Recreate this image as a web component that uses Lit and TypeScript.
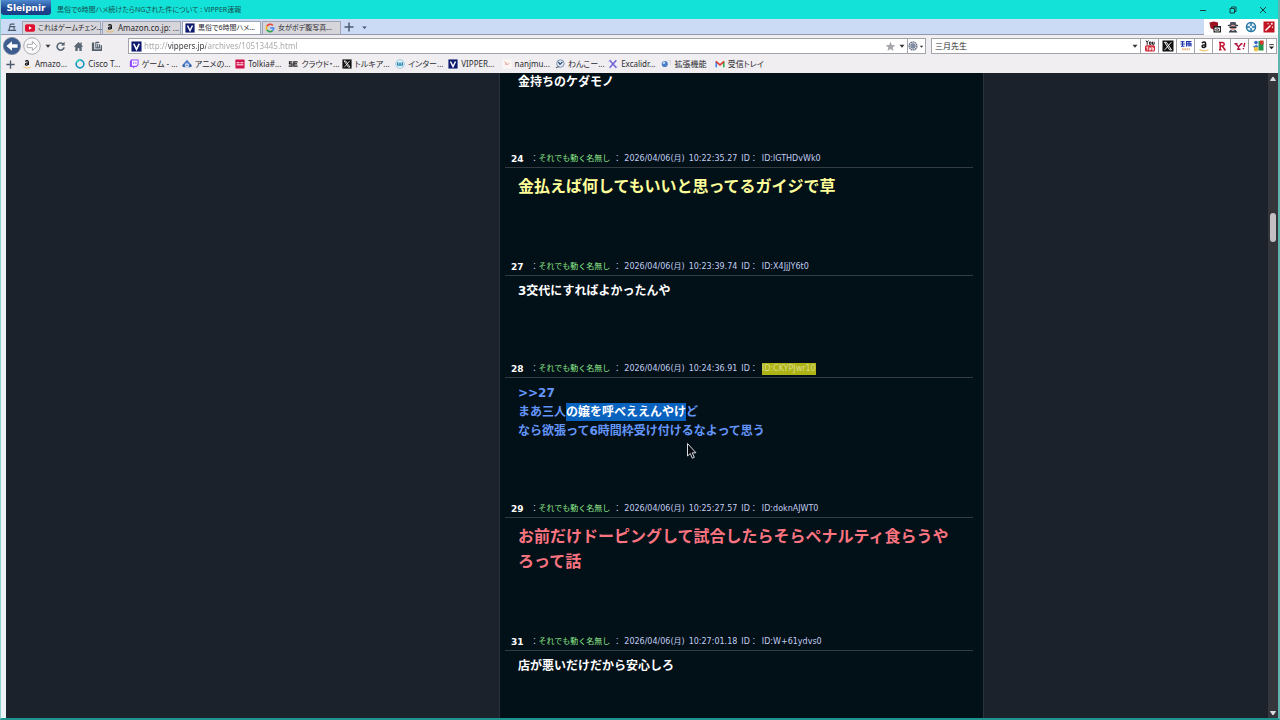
import { LitElement, html, css, svg, nothing, TemplateResult } from "lit";
import { customElement, property } from "lit/decorators.js";
import { classMap } from "lit/directives/class-map.js";

/* ---------- icons, all on a 12 x 12 grid ---------- */
const amazon = svg`<path d="M4.200 3.200C4.600 1.700 7.600 1.600 7.600 3.600v3.600M7.600 4.800C5.400 4.700 4 5.300 4.100 6.500c.2 1.400 2.700 1.200 3.500-.4" fill="none" stroke="#111" stroke-width="1.500"/><path d="M1.500 9.400c3 1.900 6.500 1.900 9 .2" fill="none" stroke="#f0b552" stroke-width="1.100"/>`;
const vip = svg`<rect x=".5" y=".5" width="11" height="11" fill="#0d1a6e"/><path d="M3 3l3 6.200L9 3" fill="none" stroke="#fff" stroke-width="1.700"/>`;
const xLogo = svg`<rect x=".5" y=".5" width="11" height="11" fill="#111"/><path d="M2.500 2.300h1.900l5.100 7.500H7.600z" fill="none" stroke="#fff" stroke-width="1"/><path d="M9.300 2.200L2.700 9.900" stroke="#fff" stroke-width=".9"/>`;

const ICONS: Record<string, TemplateResult> = {
  amazon,
  vip,
  x: xLogo,
  tray: svg`<path d="M4 2.500h5M3 5.500h7M1 10h10M4 2.500L2.500 9.500M8.500 5.500v4" fill="none" stroke="#4c5a66" stroke-width="1.300"/>`,
  youtube: svg`<rect x="0" y="1.500" width="12" height="9" rx="2" fill="#e01030"/><path d="M4.700 4v4l3.500-2z" fill="#fff"/>`,
  google: svg`<g fill="none" stroke-width="2"><path d="M9.400 3A4.400 4.400 0 0 0 2.200 4" stroke="#e8453c"/><path d="M2.200 4a4.400 4.400 0 0 0 0 4" stroke="#f6b90c"/><path d="M2.200 8a4.400 4.400 0 0 0 6.800 1.300" stroke="#34a553"/><path d="M9 9.300A4.400 4.400 0 0 0 10.400 6H6.200" stroke="#4285f4"/></g>`,
  plus: svg`<path d="M6 1.500v9M1.500 6h9" stroke="#4c5a70" stroke-width="1.500"/>`,
  down: svg`<path d="M3 4.500h6L6 8z" fill="#333"/>`,
  chevron: svg`<path d="M3 4.500h6L6 8z" fill="#3f5078"/>`,
  reload: svg`<path d="M9.200 3.600A3.900 3.900 0 1 0 10 7" fill="none" stroke="#53606e" stroke-width="1.700"/><path d="M6.500 4.800h4V.8z" fill="#53606e"/>`,
  home: svg`<path d="M6 1L.8 6.200h1.700V11h2.600V8h1.800v3h2.600V6.200h1.700L9.500 4.500V1.700H8v1.200z" fill="#5a6876"/>`,
  save: svg`<path d="M1 1.500h2.500V9h7V4.500H12V11H1z" fill="#53606e"/><path d="M5.300 1v6.500h4V3.500M5.300 1.500H9M7.300 3v4" fill="none" stroke="#53606e" stroke-width="1.200"/>`,
  cisco: svg`<circle cx="6" cy="6" r="4.600" fill="none" stroke="#1598c4" stroke-width="2"/><path d="M1.800 4a4.600 4.600 0 0 1 5-2.500" fill="none" stroke="#42d0c0" stroke-width="2"/>`,
  twitch: svg`<path d="M2.500.5H11.500v6.700L9 9.700H6.700L4.800 11.600V9.700H1V3z" fill="#9146ff"/><path d="M3.500 1.700h6.800v5L8.700 8.200H3.500z" fill="#fff"/><path d="M5.700 3.300v2.900M8.300 3.300v2.900" stroke="#9146ff" stroke-width="1"/>`,
  anime: svg`<path d="M1 6.500L6 1l5 5.500-1 3.500H2z" fill="#4d7cc9"/><circle cx="6" cy="7.500" r="2.500" fill="#e9f1fd"/><path d="M4.500 7.500h3" stroke="#30528f"/><circle cx="1.800" cy="8" r="1.500" fill="#345fa9"/><circle cx="10.200" cy="8" r="1.500" fill="#345fa9"/>`,
  tolkia: svg`<rect x=".5" y=".5" width="11" height="11" rx="1" fill="#d3124d"/><path d="M2 4.500h3.500M6.500 4.500h3.500M2 7h8" stroke="#fff" stroke-width="1.200"/>`,
  se: svg`<path d="M5.200 3.300H1.800v2.500h3v2.700H.8M11.500 3.300H7v5.200h4.500M7 5.900h4" fill="none" stroke="#222" stroke-width="1.500"/>`,
  inter: svg`<circle cx="6" cy="6" r="5.200" fill="#e3f2fa" stroke="#8fc3dc"/><path d="M3 4v3.500h2V4M5 7.500h2V4M9 4v3.500H7" fill="none" stroke="#1f7fae" stroke-width="1.200"/>`,
  nanj: svg`<rect x=".5" y=".5" width="11" height="11" fill="#fbf6f4"/><path d="M3 3l3 4 3-2M4 7l2-3" fill="none" stroke="#e39a8d" stroke-width="1"/>`,
  wan: svg`<circle cx="6.500" cy="5.500" r="4.500" fill="#dfe8f4" stroke="#6683ab"/><path d="M4 3.500l2 3 3-3" fill="none" stroke="#27406b" stroke-width="1.300"/><path d="M1 10.500l4-1.500" stroke="#55606e" stroke-width="1.500"/>`,
  excali: svg`<path d="M2 1.500l8 9M10 1.500l-8 9" stroke="#6b63d8" stroke-width="1.800"/><path d="M1 3l2-2M9 11l2-2" stroke="#8c86e6" stroke-width="1.200"/>`,
  ext: svg`<circle cx="4.500" cy="6" r="3.700" fill="#4c7ec6"/><circle cx="3.500" cy="4.500" r="1.600" fill="#b9d6f5"/><path d="M8 1.500l3.500 1v5" fill="none" stroke="#d7d9de" stroke-width="1.500"/>`,
  gmail: svg`<path d="M1.500 10V3" stroke="#4285f4" stroke-width="2"/><path d="M10.500 10V3" stroke="#34a853" stroke-width="2"/><path d="M1 2.800L6 7l5-4.200" fill="none" stroke="#e0402f" stroke-width="2"/>`,
  star: svg`<path d="M6 .8l1.500 3.500 3.800.3-2.900 2.500.9 3.700L6 8.800l-3.300 2 .9-3.700L.7 4.600l3.800-.3z" fill="#a7a7ab"/>`,
  gear: svg`<circle cx="6" cy="6" r="4.700" fill="none" stroke="#5c6780" stroke-width="1.600" stroke-dasharray="2 .6"/><circle cx="6" cy="6" r="2.700" fill="#aab4c9" stroke="#48536c"/><circle cx="6" cy="6" r="1" fill="#48536c"/>`,
  ytSearch: svg`<path d="M2 .5l1.200 2L4.400.5M3.200 2.500v2.300M5.500 2h1.600v2.300H5.500zM8.500 1.700v2.600h1.600V1.700" fill="none" stroke="#222" stroke-width="1"/><rect x="1" y="5.300" width="10" height="6.200" rx="1.500" fill="#cf2936"/><path d="M2.300 7h2M3.300 7v3.300M5.300 7.500v2.500h1.200V7.500M8 6.800v3.200h1.500V8H8" fill="none" stroke="#fff" stroke-width=".8"/>`,
  kakaku: svg`<path d="M.5 1.700h4M2.500 1v5.500M.5 4h4.500M1 6.200h3.500M6 1.500h5.500M6 3.200h5M6.500 5h5M6.500 1v5.500M9 1v5.500M11 3v3.500" stroke="#1c35ab" stroke-width="1.100"/><path d="M2 9.300h8" stroke="#e8b988" stroke-width="2" stroke-dasharray="1.700 .6"/>`,
  rakuten: svg`<path d="M4.200 9.500V2.500h2.300a1.700 1.700 0 0 1 0 3.500H4.200M6.300 6L8.700 9.500M3 9.800h2.500M3 2.500h1.500M7.700 9.800h2" fill="none" stroke="#c4122f" stroke-width="1.500"/>`,
  yahoo: svg`<path d="M.5 3.700h3M1.800 4L4.500 6.700l3-3M4.500 6.700V9M3 9.200h3.500M6.500 3.700h2" fill="none" stroke="#b3123f" stroke-width="1.400"/><path d="M10.800 2.800L9.800 7M9.400 8v1.300" stroke="#b3123f" stroke-width="1.400"/>`,
  gmaps: svg`<rect x="6.500" y="1" width="5" height="9.500" fill="#23934f"/><path d="M8 .5h3.500v4H8z" fill="#d83a2f"/><circle cx="4" cy="2.500" r="1.800" fill="#3a68c9"/><path d="M.8 6.500l4-2 1.700 2.500-3.500 1.700z" fill="#4f86c8"/><circle cx="4" cy="9.200" r="2.200" fill="#edc142"/>`,
  more: svg`<path d="M3 3.500h6" stroke="#222" stroke-width="1.200"/><path d="M2.500 6h7L6 9.500z" fill="#222"/>`,
  shield: svg`<path d="M.5 1.500L5 .5l4 1v4.500L5 9 1.500 7z" fill="#9c1420"/><rect x="4.500" y="5" width="7.500" height="6.500" fill="#222"/><path d="M6 7h4.500v3H6zM6 7l2.200 1.500L10.500 7" fill="none" stroke="#fff" stroke-width=".8"/>`,
  spy: svg`<path d="M2.500 4l1-3h5l1 3" fill="#4b5565"/><path d="M.8 4.500h10.400" stroke="#39424f" stroke-width="1.300"/><circle cx="6" cy="6.500" r="2.800" fill="#d99f92"/><path d="M2.500 6.300h7" stroke="#1f2937" stroke-width="1.700"/><path d="M1.500 11.500l2-2.700L6 10l2.500-1.200 2 2.700z" fill="#39424f"/>`,
  target: svg`<circle cx="6" cy="6" r="4.500" fill="#dff0f8" stroke="#2778a5" stroke-width="1.500"/><path d="M6 2v3M6 7v3M2 6h3M7 6h3" stroke="#2778a5" stroke-width="1.500"/>`,
  wand: svg`<rect x=".5" y=".5" width="11" height="11" fill="#c01522"/><path d="M2.500 9.500l5-5" stroke="#fff" stroke-width="1.500"/><path d="M8.800 1.800v2M7.800 2.800h2M9.500 5.500v1.500M5 2v1.300" stroke="#fff" stroke-width=".9"/>`,
  min: svg`<path d="M3 6.500h6" stroke="#17403f" stroke-width="1"/>`,
  restore: svg`<path d="M3 4.500h4.500V9H3zM4.500 4.500V3H9v4.500H7.500" fill="none" stroke="#17403f" stroke-width="1"/>`,
  close: svg`<path d="M3 3l6 6M9 3l-6 6" stroke="#17403f" stroke-width="1"/>`,
  back: svg`<circle cx="6" cy="6" r="5.700" fill="#3d5d91" stroke="#6c7c98" stroke-width=".5"/><path d="M2.300 6L6 2.800v2.100h3.700v2.200H6v2.100z" fill="#fff"/>`,
  forward: svg`<circle cx="6" cy="6" r="5.500" fill="#f8f8fa" stroke="#a2a2a8" stroke-width=".6"/><path d="M9.500 6L6.300 3v1.900H2.800v2.200h3.500V9z" fill="#fff" stroke="#a2a2a8" stroke-width=".6"/>`,
};

@customElement("ui-icon")
class UiIcon extends LitElement {
  @property() name = "";
  @property({ type: Number }) size = 12;
  static styles = css`
    :host { display: inline-flex; flex: none; }
    svg { display: block; }
  `;
  render() {
    return html`<svg width=${this.size} height=${this.size} viewBox="0 0 12 12" aria-hidden="true">${ICONS[this.name]}</svg>`;
  }
}

/* ---------- browser chrome ---------- */
const TABS = [
  { icon: "youtube", text: "これはゲームチェン...", compact: true },
  { icon: "amazon", text: "Amazon.co.jp: ..." },
  { icon: "vip", text: "黒俗で6時間ハメ...", compact: true, active: true },
  { icon: "google", text: "女がボデ腹写真...", compact: true },
];

const BOOKMARKS = [
  ["amazon", "Amazo..."],
  ["cisco", "Cisco T..."],
  ["twitch", "ゲーム - ..."],
  ["anime", "アニメの..."],
  ["tolkia", "Tolkia#..."],
  ["se", "クラウド・..."],
  ["x", "トルキア..."],
  ["inter", "インター..."],
  ["vip", "VIPPER..."],
  ["nanj", "nanjmu..."],
  ["wan", "わんこー..."],
  ["excali", "Excalidr..."],
  ["ext", "拡張機能"],
  ["gmail", "受信トレイ"],
];

const ENGINES = [
  ["ytSearch", "YouTube"],
  ["x", "X"],
  ["kakaku", "価格.com"],
  ["amazon", "Amazon"],
  ["rakuten", "楽天"],
  ["yahoo", "Yahoo!"],
  ["gmaps", "Google マップ"],
];

@customElement("browser-chrome")
class BrowserChrome extends LitElement {
  static styles = css`
    :host {
      display: block;
      flex: none;
      color: #2a2a30;
      font: 8px/12px "Noto Sans", "Noto Sans CJK JP", sans-serif;
      font-feature-settings: "palt";
      background: #f0eef1;
    }
    button, input {
      font: inherit;
      font-feature-settings: inherit;
      color: inherit;
      margin: 0;
      padding: 0;
      border: 0;
      background: none;
    }
    button { display: flex; align-items: center; justify-content: center; }
    .title { display: flex; height: 19px; background: #12e2d8; }
    .brand {
      width: 50px;
      height: 15px;
      border-radius: 0 0 3px 3px;
      background: linear-gradient(#4f8ad0, #1c4590 60%, #1b3d84);
      color: #fff;
      font: bold 9px/14px "DejaVu Sans", sans-serif;
    }
    .caption { flex: 1; padding-left: 6px; font-size: 7px; line-height: 19px; color: #14504f; white-space: nowrap; }
    .window { display: flex; gap: 18px; padding-right: 9px; }
    .tabs { display: flex; height: 15px; background: #cbdaf5; border-bottom: 1px solid #9698ae; }
    .tray { width: 16px; margin-left: 3px; }
    .list { display: flex; align-items: flex-end; gap: 1px; padding-left: 2px; flex: 1; }
    .tab {
      width: 79px;
      height: 13px;
      gap: 3px;
      padding-left: 2px;
      justify-content: flex-start;
      box-sizing: border-box;
      border: 1px solid #a2a5b4;
      border-bottom: 0;
      background: #d6d5da;
      white-space: nowrap;
    }
    .compact { font-size: 7px; }
    .active { background: #fff; }
    .small { width: 14px; height: 14px; }
    .extensions { display: flex; align-items: center; gap: 6px; height: 16px; padding: 0 3px 0 5px; background: #fff; }
    .address { display: flex; align-items: center; height: 22px; padding: 0 1px 0 2px; }
    .nav { display: flex; align-items: center; gap: 2px; width: 125px; }
    .tools { display: flex; gap: 7px; }
    .box {
      display: flex;
      align-items: center;
      height: 16px;
      box-sizing: border-box;
      border: 1px solid #a3a3aa;
      background: #fff;
    }
    .url { flex: 700; padding-left: 2px; }
    .search { flex: 246; min-width: 346px; margin-left: 5px; padding-left: 3px; box-sizing: border-box; }
    .field { flex: 1; min-width: 0; height: 12px; outline: 0; }
    .location {
      margin-left: 2px;
      color: transparent;
      background: linear-gradient(90deg, #a4a4a8 24px, #33333a 24px, #33333a 62px, #a4a4a8 62px);
      background-clip: text;
      -webkit-background-clip: text;
    }
    .cell { width: 18px; height: 14px; box-sizing: border-box; border-left: 1px solid #a3a3aa; }
    .last { width: 10px; }
    .arrow { width: 11px; }
    .bookmarks { display: flex; height: 16px; padding-left: 2px; }
    .links { display: grid; grid-template-columns: repeat(14, 1fr); width: 746px; height: 14px; margin-left: 5px; }
    .link { display: flex; align-items: center; gap: 3px; color: inherit; text-decoration: none; white-space: nowrap; }
  `;
  render() {
    return html`
      <div class="title">
        <button class="brand">Sleipnir</button>
        <div class="caption">黒俗で6時間ハメ続けたらNGされた件について : VIPPER速報</div>
        <div class="window">
          <button aria-label="最小化"><ui-icon name="min"></ui-icon></button>
          <button aria-label="元に戻す"><ui-icon name="restore"></ui-icon></button>
          <button aria-label="閉じる"><ui-icon name="close"></ui-icon></button>
        </div>
      </div>
      <div class="tabs">
        <button class="tray" aria-label="タブ一覧"><ui-icon name="tray" size="10"></ui-icon></button>
        <div class="list" role="tablist">
          ${TABS.map(
            (t) => html`<button role="tab" class=${classMap({ tab: true, compact: !!t.compact, active: !!t.active })} aria-selected=${t.active ? "true" : "false"}>
              <ui-icon name=${t.icon} size="10"></ui-icon>${t.text}
            </button>`
          )}
          <button class="small" aria-label="新しいタブ"><ui-icon name="plus"></ui-icon></button>
          <button class="small" aria-label="閉じたタブ"><ui-icon name="chevron" size="9"></ui-icon></button>
        </div>
        <div class="extensions">
          ${["shield", "spy", "target", "wand"].map((n) => html`<button aria-label=${n}><ui-icon name=${n}></ui-icon></button>`)}
        </div>
      </div>
      <div class="address">
        <div class="nav">
          <button aria-label="戻る"><ui-icon name="back" size="18"></ui-icon></button>
          <button aria-label="進む"><ui-icon name="forward" size="18"></ui-icon></button>
          <button aria-label="履歴"><ui-icon name="down" size="10"></ui-icon></button>
          <div class="tools">
            <button aria-label="更新"><ui-icon name="reload" size="11"></ui-icon></button>
            <button aria-label="ホーム"><ui-icon name="home" size="11"></ui-icon></button>
            <button aria-label="保存"><ui-icon name="save" size="11"></ui-icon></button>
          </div>
        </div>
        <div class="box url">
          <ui-icon name="vip" size="11"></ui-icon>
          <input class="field location" aria-label="アドレス" value="http://vippers.jp/archives/10513445.html" />
          <button aria-label="お気に入り"><ui-icon name="star" size="11"></ui-icon></button>
          <button class="arrow" aria-label="候補"><ui-icon name="down" size="10"></ui-icon></button>
          <button class="cell" aria-label="エンジン"><ui-icon name="gear" size="10"></ui-icon><ui-icon name="down" size="7"></ui-icon></button>
        </div>
        <div class="box search">
          <input class="field" aria-label="検索" value="三月先生" />
          <button class="arrow" aria-label="検索履歴"><ui-icon name="down" size="10"></ui-icon></button>
          ${ENGINES.map(([i, n]) => html`<button class="cell" aria-label=${n}><ui-icon name=${i}></ui-icon></button>`)}
          <button class="cell last" aria-label="その他"><ui-icon name="more" size="9"></ui-icon></button>
        </div>
      </div>
      <div class="bookmarks">
        <button class="small" aria-label="追加"><ui-icon name="plus" size="11"></ui-icon></button>
        <nav class="links">
          ${BOOKMARKS.map(([i, n]) => html`<a class="link" href="#"><ui-icon name=${i} size="10"></ui-icon>${n}</a>`)}
        </nav>
      </div>
    `;
  }
}

/* ---------- thread ---------- */
interface Post {
  no?: number;
  time?: string;
  id?: string;
  marked?: boolean;
  tone?: string;
  body: TemplateResult;
}

const POSTS: Post[] = [
  { body: html`金持ちのケダモノ` },
  { no: 24, time: "10:22:35.27", id: "lGTHDvWk0", tone: "yellow", body: html`金払えば何してもいいと思ってるガイジで草` },
  { no: 27, time: "10:23:39.74", id: "X4JjJY6t0", body: html`3交代にすればよかったんや` },
  {
    no: 28,
    time: "10:24:36.91",
    id: "CKYPJwr10",
    marked: true,
    tone: "blue",
    body: html`&gt;&gt;27<br />まあ三人<span class="selected">の嬢を呼べええんやけ</span>ど<br />なら欲張って6時間枠受け付けるなよって思う`,
  },
  { no: 29, time: "10:25:27.57", id: "doknAJWT0", tone: "red", body: html`お前だけドーピングして試合したらそらペナルティ食らうやろって話` },
  { no: 31, time: "10:27:01.18", id: "W+61ydvs0", body: html`店が悪いだけだから安心しろ` },
];

@customElement("thread-view")
class ThreadView extends LitElement {
  static styles = css`
    :host {
      display: block;
      box-sizing: border-box;
      padding: 0 10px 0 5px;
      border: solid #2c323d;
      border-width: 0 1px;
      background: #021018;
      font-family: "DejaVu Sans", "Noto Sans CJK JP", sans-serif;
    }
    .meta {
      display: flex;
      align-items: center;
      gap: 3px;
      height: 17px;
      padding-left: 6px;
      border-bottom: 1px solid #343a42;
      color: #c3cdf0;
      font-size: 8px;
      line-height: 12px;
      white-space: nowrap;
    }
    .no { margin-right: 4px; color: #fff; font-size: 9px; font-weight: bold; }
    .name { color: #8fe88a; }
    .stamp { display: flex; gap: 4px; }
    .marked { background: #aeb415; color: #d9dc8a; }
    .body {
      padding: 6px 13px 59px;
      color: #fff;
      font-size: 12px;
      font-weight: bold;
      line-height: 19px;
      word-break: break-all;
    }
    .first { padding-top: 0; padding-bottom: 58px; }
    .yellow { color: #ffff9a; font-size: 16px; line-height: 25px; }
    .red { color: #fb7480; font-size: 16px; line-height: 25px; }
    .blue { color: #6496fa; }
    .selected { padding: 2px 0; background: #0a62bf; color: #fff; }
  `;
  render() {
    return POSTS.map(
      (p) => html`<article>
        ${p.no
          ? html`<header class="meta">
              <span class="no">${p.no}</span>
              <span>：<span class="name">それでも動く名無し</span></span>
              <span>：</span>
              <span class="stamp">
                <span>2026/04/06(月)</span><span>${p.time}</span><span>ID：</span><span class=${p.marked ? "marked" : "id"}>ID:${p.id}</span>
              </span>
            </header>`
          : nothing}
        <div class="body ${p.tone ?? ""} ${p.no ? "" : "first"}">${p.body}</div>
      </article>`
    );
  }
}

@customElement("app-root")
class AppRoot extends LitElement {
  static styles = css`
    :host {
      display: flex;
      flex-direction: column;
      height: 100vh;
      box-sizing: border-box;
      border-right: 2px solid #5fb5ae;
      border-bottom: 2px solid #1f938e;
      border-left: 1px solid #8fcfd0;
      overflow: hidden;
      background: #12e2d8;
    }
    .view { display: flex; flex: 1; min-height: 0; padding-left: 5px; background: #edf3f6; }
    .page {
      display: grid;
      grid-template-columns: 493fr 485px 284fr;
      flex: 1;
      overflow: hidden;
      background: #1b222c;
    }
    .thread { grid-column: 2; }
    .scroll {
      display: grid;
      grid-template-rows: 12px 128fr 29px 465fr 10px;
      justify-items: center;
      width: 10px;
      background: #35363b;
    }
    .step { display: flex; align-items: center; padding: 0; border: 0; background: none; }
    .thumb { grid-row: 3; width: 6px; border-radius: 3px; background: #c3bfc2; }
    .down { grid-row: 5; }
    .cursor { position: absolute; left: 686px; top: 442px; }
  `;
  render() {
    return html`
      <browser-chrome></browser-chrome>
      <div class="view">
        <main class="page"><thread-view class="thread"></thread-view></main>
        <div class="scroll">
          <button class="step" aria-label="上へ"><svg width="8" height="8"><path d="M4 2l2.500 3.500h-5z" fill="#dcdcde" stroke="#dcdcde" /></svg></button>
          <div class="thumb"></div>
          <button class="step down" aria-label="下へ"><svg width="8" height="8"><path d="M4 6l2.500-3.500h-5z" fill="#dcdcde" stroke="#dcdcde" /></svg></button>
        </div>
      </div>
      <svg class="cursor" width="12" height="18" viewBox="0 0 12 18">
        <path d="M1.500 1.500v12.500l2.800-2.500 2 4.700 2-.9-2-4.500h3.700z" fill="#05080c" stroke="#d8dade" stroke-width="1" />
      </svg>
    `;
  }
}
